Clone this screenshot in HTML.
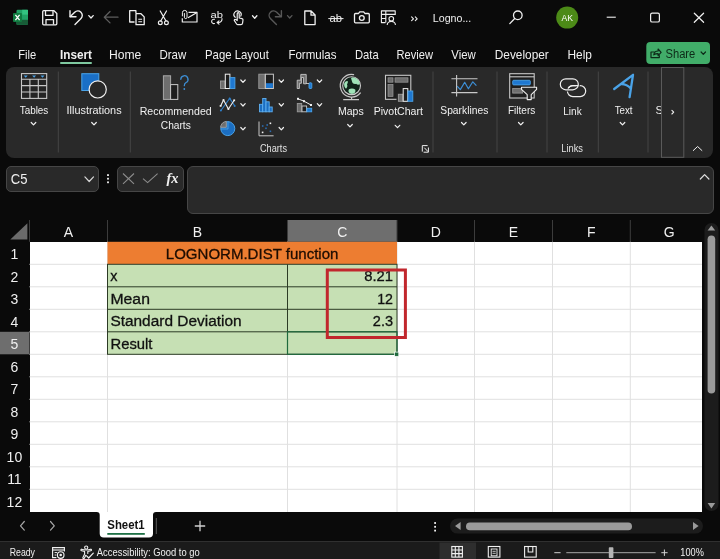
<!DOCTYPE html>
<html lang="en">
<head>
<meta charset="utf-8">
<title>Logno... - Excel</title>
<style>
html,body{margin:0;padding:0;background:#0a0a0a;}
body{width:720px;height:559px;overflow:hidden;position:relative;font-family:"Liberation Sans", sans-serif;color:#fff;}
.sec{position:absolute;left:0;width:720px;overflow:hidden;will-change:transform;}
svg{position:absolute;left:0;top:0;display:block;font-family:"Liberation Sans", sans-serif;}
svg text{font-family:"Liberation Sans", sans-serif;white-space:pre;}
#titlebar{top:0;height:38px;}
#tabs{top:38px;height:29px;}
#ribbon{top:67px;height:91px;}
#ribbon .panel{position:absolute;left:6px;top:0;width:707px;height:90.5px;background:#292929;border-radius:8px;}
#formulabar{top:158px;height:62px;}
.fbox{position:absolute;background:#292929;border:1px solid #464646;border-radius:5px;box-sizing:border-box;}
#sheet{top:220px;height:292px;}
#colhead{position:absolute;left:0;top:0;width:702px;height:22px;background:#0a0a0a;}
#rowhead{position:absolute;left:0;top:22px;width:29.5px;height:270px;background:#0a0a0a;}
#cells{position:absolute;left:29.5px;top:21.8px;width:672.5px;height:270.2px;background:#fff;}
#sheettabs{top:512px;height:29px;}
#statusbar{top:541px;height:18px;background:#1b1b1b;border-top:1px solid #303030;box-sizing:border-box;}
</style>
</head>
<body>
<div class="sec" id="titlebar"><svg width="720" height="38" viewBox="0 0 720 38"><g><rect x="16.5" y="9.8" width="11.5" height="15" rx="1.2" fill="#21a366"/><rect x="22.2" y="9.8" width="5.8" height="5" fill="#33c481"/><rect x="16.5" y="14.8" width="5.7" height="5" fill="#107c41"/><rect x="22.2" y="14.8" width="5.8" height="5" fill="#21a366"/><rect x="16.5" y="19.8" width="11.5" height="5" fill="#185c37"/><rect x="13" y="13" width="9" height="9" rx="1" fill="#107c41"/><path d="M15.4 14.8 L19.6 20.2 M19.6 14.8 L15.4 20.2" stroke="#fff" stroke-width="1.3" fill="none"/></g><g fill="none" stroke="#f0f0f0" stroke-width="1.3" stroke-linejoin="round"><path d="M42.7 11.7 a1 1 0 0 1 1-1 h10.3 l2.8 2.8 v10.3 a1 1 0 0 1 -1 1 h-12.1 a1 1 0 0 1 -1-1 z"/><path d="M45.5 10.8 v4.6 h7.5 v-4.6"/><path d="M46 24.6 v-5 h7.5 v5"/></g><g fill="none" stroke="#f0f0f0" stroke-width="1.4" stroke-linecap="round" stroke-linejoin="round"><path d="M70 10.8 v6 h6"/><path d="M70.3 16.6 l4.4 -4.3 a4.4 4.4 0 0 1 6.3 6.2 l-6 6"/></g><path d="M88.8 15.600000000000001 L91 18.0 L93.2 15.600000000000001" fill="none" stroke="#f0f0f0" stroke-width="1.3" stroke-linecap="round" stroke-linejoin="round"/><path d="M118 17.2 H104.5 M110 11.5 L104.3 17.2 L110 22.9" fill="none" stroke="#5e5e5e" stroke-width="1.3" stroke-linecap="round" stroke-linejoin="round"/><g fill="none" stroke="#f0f0f0" stroke-width="1.3" stroke-linejoin="round"><path d="M134.5 22 h-4.8 v-11.3 h6.2 l0 2.5"/><path d="M136 13.7 h5 l3.2 3.2 v7.8 h-8.2 z"/><path d="M138.3 19.3 h3.8 M138.3 21.8 h3.8" stroke-width="1.1"/></g><g fill="none" stroke="#f0f0f0" stroke-width="1.2" stroke-linecap="round"><path d="M160.2 11 L166 21 M166.5 11 L160.7 21"/><circle cx="160.3" cy="22.7" r="1.9"/><circle cx="166.4" cy="22.7" r="1.9"/></g><g fill="none" stroke="#f0f0f0" stroke-width="1.2" stroke-linejoin="round"><path d="M188.5 12.3 H197 V22 H182.3 V18.3"/><path d="M188 17.8 L196.6 12.7"/><path d="M182.4 16.3 v-3.6 a2.3 2.3 0 0 1 4.6 0 v4.6 a1.3 1.3 0 0 1 -2.6 0 v-4.2" stroke-width="1"/></g><text x="210.5" y="17.5" font-size="9" fill="#f0f0f0" text-anchor="start" font-weight="normal" textLength="12.5" lengthAdjust="spacingAndGlyphs">ab</text><g fill="none" stroke="#f0f0f0" stroke-width="1.1" stroke-linecap="round" stroke-linejoin="round"><path d="M214.5 19.3 a2.2 2.2 0 1 0 0 4.2"/><path d="M222 18.5 a3.5 3.5 0 0 1 -3.5 4 h-1.2"/><path d="M219 20.8 l-1.8 1.7 l1.8 1.7"/></g><g fill="none" stroke="#f0f0f0" stroke-width="1.2" stroke-linecap="round" stroke-linejoin="round"><path d="M235.2 17.3 a3.6 3.6 0 1 1 5.6 -1.2"/><path d="M237.2 20.5 v-6.8 a1 1 0 0 1 2 0 v4.3 l2.8 0.6 a1.3 1.3 0 0 1 1 1.4 l-0.5 3.4 a1.6 1.6 0 0 1 -1.6 1.3 h-3 a1.6 1.6 0 0 1 -1.3 -0.7 l-2.2 -3.3 a0.9 0.9 0 0 1 1.4 -1.1 z"/></g><path d="M252.5 15.8 L254.7 18.2 L256.9 15.8" fill="none" stroke="#f0f0f0" stroke-width="1.3" stroke-linecap="round" stroke-linejoin="round"/><g fill="none" stroke="#585858" stroke-width="1.4" stroke-linecap="round" stroke-linejoin="round"><path d="M281.4 10.8 v6 h-6"/><path d="M281.1 16.6 l-4.4 -4.3 a4.4 4.4 0 0 0 -6.3 6.2 l6 6"/></g><path d="M287.5 15.600000000000001 L289.7 18.0 L291.9 15.600000000000001" fill="none" stroke="#585858" stroke-width="1.3" stroke-linecap="round" stroke-linejoin="round"/><path d="M304.8 11 h6.3 l4 4 v9.6 h-10.3 z M311 11 v4.2 h4.1" fill="none" stroke="#f0f0f0" stroke-width="1.3" stroke-linejoin="round"/><text x="329.5" y="21.5" font-size="10" fill="#f0f0f0" text-anchor="start" font-weight="normal" textLength="12.5" lengthAdjust="spacingAndGlyphs">ab</text><path d="M328.3 18.6 H343.5" stroke="#f0f0f0" stroke-width="1"/><g fill="none" stroke="#f0f0f0" stroke-width="1.3" stroke-linejoin="round"><path d="M355.5 13.5 h3 l1.2 -1.7 h4 l1.2 1.7 h3.4 a1 1 0 0 1 1 1 v7.3 a1 1 0 0 1 -1 1 h-12.8 a1 1 0 0 1 -1 -1 v-7.3 a1 1 0 0 1 1 -1z"/><circle cx="361.8" cy="18" r="2.4"/></g><g fill="none" stroke="#f0f0f0" stroke-width="1.1" stroke-linejoin="round"><path d="M385.5 22.6 H381.4 V10.9 H395.2 V15"/><path d="M381.4 14.4 H395.2 M385.8 10.9 V22.6 M381.4 18.5 H386"/><circle cx="391.3" cy="18.8" r="2.3"/><path d="M387.2 25 a4.1 3.6 0 0 1 8.2 0"/></g><path d="M411.6 16.9 l1.9 1.9 l-1.9 1.9 M415.3 16.9 l1.9 1.9 l-1.9 1.9" fill="none" stroke="#f0f0f0" stroke-width="1.1" stroke-linecap="round" stroke-linejoin="round"/><text x="432.8" y="22" font-size="11" fill="#f0f0f0" text-anchor="start" font-weight="normal" textLength="38.5" lengthAdjust="spacingAndGlyphs">Logno...</text><g fill="none" stroke="#f0f0f0" stroke-width="1.3" stroke-linecap="round"><circle cx="517.8" cy="15.3" r="4.3"/><path d="M514.7 18.5 L509.8 23.6"/></g><circle cx="567.2" cy="17.6" r="11" fill="#4c8a17"/><text x="567.2" y="21" font-size="9.5" fill="#fff" text-anchor="middle" font-weight="normal" textLength="11.5" lengthAdjust="spacingAndGlyphs">AK</text><path d="M606.7 17.2 H615.8" stroke="#f0f0f0" stroke-width="1.1"/><rect x="650.6" y="13.2" width="8.8" height="8.8" rx="1.6" fill="none" stroke="#f0f0f0" stroke-width="1.2"/><path d="M694.3 13.2 L703.6 22.3 M703.6 13.2 L694.3 22.3" stroke="#f0f0f0" stroke-width="1.2" stroke-linecap="round"/></svg></div>
<div class="sec" id="tabs"><svg width="720" height="29" viewBox="0 38 720 29"><text x="18.3" y="58.6" font-size="12.2" fill="#f0f0f0" text-anchor="start" font-weight="normal" textLength="18.0" lengthAdjust="spacingAndGlyphs">File</text><text x="60" y="58.6" font-size="12.2" fill="#f0f0f0" text-anchor="start" font-weight="bold" textLength="32" lengthAdjust="spacingAndGlyphs">Insert</text><text x="109" y="58.6" font-size="12.2" fill="#f0f0f0" text-anchor="start" font-weight="normal" textLength="32.3" lengthAdjust="spacingAndGlyphs">Home</text><text x="159.5" y="58.6" font-size="12.2" fill="#f0f0f0" text-anchor="start" font-weight="normal" textLength="26.8" lengthAdjust="spacingAndGlyphs">Draw</text><text x="205" y="58.6" font-size="12.2" fill="#f0f0f0" text-anchor="start" font-weight="normal" textLength="63.8" lengthAdjust="spacingAndGlyphs">Page Layout</text><text x="288.4" y="58.6" font-size="12.2" fill="#f0f0f0" text-anchor="start" font-weight="normal" textLength="48.1" lengthAdjust="spacingAndGlyphs">Formulas</text><text x="355" y="58.6" font-size="12.2" fill="#f0f0f0" text-anchor="start" font-weight="normal" textLength="23.7" lengthAdjust="spacingAndGlyphs">Data</text><text x="396.6" y="58.6" font-size="12.2" fill="#f0f0f0" text-anchor="start" font-weight="normal" textLength="36.4" lengthAdjust="spacingAndGlyphs">Review</text><text x="451.3" y="58.6" font-size="12.2" fill="#f0f0f0" text-anchor="start" font-weight="normal" textLength="24.5" lengthAdjust="spacingAndGlyphs">View</text><text x="494.8" y="58.6" font-size="12.2" fill="#f0f0f0" text-anchor="start" font-weight="normal" textLength="54.0" lengthAdjust="spacingAndGlyphs">Developer</text><text x="567.5" y="58.6" font-size="12.2" fill="#f0f0f0" text-anchor="start" font-weight="normal" textLength="24.5" lengthAdjust="spacingAndGlyphs">Help</text><rect x="60" y="62" width="32" height="2" rx="1" fill="#7fc9a0"/><rect x="646.3" y="42" width="63.7" height="22" rx="4" fill="#41ad69"/><g fill="none" stroke="#0d2a18" stroke-width="1.2" stroke-linejoin="round" stroke-linecap="round"><path d="M654.2 52 h-3.2 v5.6 h8.3 v-2"/><path d="M653.8 54.8 c0.3 -2.6 2 -3.8 4.3 -3.8 v-2 l3 3.3 l-3 3.3 v-2 c-1.8 0 -3.2 0.3 -4.3 1.2z"/></g><text x="665.5" y="57.8" font-size="12" fill="#0d2a18" text-anchor="start" font-weight="normal" textLength="29.8" lengthAdjust="spacingAndGlyphs">Share</text><path d="M701.0999999999999 52.0 L703.3 54.400000000000006 L705.5 52.0" fill="none" stroke="#0d2a18" stroke-width="1.2" stroke-linecap="round" stroke-linejoin="round"/></svg></div>
<div class="sec" id="ribbon"><div class="panel"></div><svg width="720" height="91" viewBox="0 67 720 91"><path d="M58.3 71.5 V152.5" stroke="#454545" stroke-width="1"/><path d="M130.3 71.5 V152.5" stroke="#454545" stroke-width="1"/><path d="M433 71.5 V152.5" stroke="#454545" stroke-width="1"/><path d="M497 71.5 V152.5" stroke="#454545" stroke-width="1"/><path d="M547 71.5 V152.5" stroke="#454545" stroke-width="1"/><path d="M598.3 71.5 V152.5" stroke="#454545" stroke-width="1"/><path d="M648 71.5 V152.5" stroke="#454545" stroke-width="1"/><g fill="none" stroke="#c8c8c8" stroke-width="1.1"><rect x="21.5" y="73.6" width="25.2" height="24.8" fill="#242424"/><path d="M21.5 79.3 H46.7 M21.5 85.6 H46.7 M21.5 92 H46.7 M29.9 79.3 V98.4 M38.3 79.3 V98.4"/></g><path d="M23.7 75.4 h4 l-2 2.3 z" fill="#4aa3e8"/><path d="M32.1 75.4 h4 l-2 2.3 z" fill="#4aa3e8"/><path d="M40.5 75.4 h4 l-2 2.3 z" fill="#4aa3e8"/><text x="19.7" y="113.5" font-size="11" fill="#f0f0f0" text-anchor="start" font-weight="normal" textLength="28.6" lengthAdjust="spacingAndGlyphs">Tables</text><path d="M31.2 122.5 L33.5 124.9 L35.8 122.5" fill="none" stroke="#f0f0f0" stroke-width="1.2" stroke-linecap="round" stroke-linejoin="round"/><rect x="81.8" y="73.7" width="17" height="16.8" fill="#1a6fc6" stroke="#4aa3e8" stroke-width="1"/><circle cx="97.7" cy="89.4" r="8.6" fill="#292929" stroke="#f0f0f0" stroke-width="1.2"/><text x="66.6" y="113.5" font-size="11" fill="#f0f0f0" text-anchor="start" font-weight="normal" textLength="55" lengthAdjust="spacingAndGlyphs">Illustrations</text><path d="M91.7 122.5 L94 124.9 L96.3 122.5" fill="none" stroke="#f0f0f0" stroke-width="1.2" stroke-linecap="round" stroke-linejoin="round"/><rect x="163.4" y="75.8" width="7.2" height="23.6" fill="#6e6e6e" stroke="#a8a8a8" stroke-width="1"/><rect x="170.6" y="84.6" width="7.2" height="14.8" fill="#1e1e1e" stroke="#c8c8c8" stroke-width="1"/><path d="M180.8 79.3 a3.6 3.6 0 1 1 5.3 3.2 c-1.3 0.8 -1.8 1.5 -1.8 3.2" fill="none" stroke="#3d8fd6" stroke-width="1.3" stroke-linecap="round"/><circle cx="184.3" cy="89" r="0.9" fill="#3d8fd6"/><text x="139.7" y="114.8" font-size="11" fill="#f0f0f0" text-anchor="start" font-weight="normal" textLength="72" lengthAdjust="spacingAndGlyphs">Recommended</text><text x="160.8" y="129.3" font-size="11" fill="#f0f0f0" text-anchor="start" font-weight="normal" textLength="30" lengthAdjust="spacingAndGlyphs">Charts</text><path d="M240.8 80.0 L243 82.4 L245.2 80.0" fill="none" stroke="#f0f0f0" stroke-width="1.2" stroke-linecap="round" stroke-linejoin="round"/><path d="M279.1 80.0 L281.3 82.4 L283.5 80.0" fill="none" stroke="#f0f0f0" stroke-width="1.2" stroke-linecap="round" stroke-linejoin="round"/><path d="M317.3 80.0 L319.5 82.4 L321.7 80.0" fill="none" stroke="#f0f0f0" stroke-width="1.2" stroke-linecap="round" stroke-linejoin="round"/><path d="M240.8 103.6 L243 106.0 L245.2 103.6" fill="none" stroke="#f0f0f0" stroke-width="1.2" stroke-linecap="round" stroke-linejoin="round"/><path d="M279.1 103.6 L281.3 106.0 L283.5 103.6" fill="none" stroke="#f0f0f0" stroke-width="1.2" stroke-linecap="round" stroke-linejoin="round"/><path d="M317.3 103.6 L319.5 106.0 L321.7 103.6" fill="none" stroke="#f0f0f0" stroke-width="1.2" stroke-linecap="round" stroke-linejoin="round"/><path d="M240.8 127.49999999999999 L243 129.89999999999998 L245.2 127.49999999999999" fill="none" stroke="#f0f0f0" stroke-width="1.2" stroke-linecap="round" stroke-linejoin="round"/><path d="M279.1 127.49999999999999 L281.3 129.89999999999998 L283.5 127.49999999999999" fill="none" stroke="#f0f0f0" stroke-width="1.2" stroke-linecap="round" stroke-linejoin="round"/><rect x="220.5" y="81" width="4.6" height="7.5" fill="#6e6e6e" stroke="#9a9a9a" stroke-width="0.9"/><rect x="225.3" y="74.2" width="4.6" height="14.3" fill="#1e1e1e" stroke="#f0f0f0" stroke-width="1"/><rect x="230.1" y="77.6" width="4.8" height="10.9" fill="#1f78d1" stroke="#4aa3e8" stroke-width="0.9"/><rect x="258.8" y="74.2" width="6.2" height="14.3" fill="#6e6e6e" stroke="#9a9a9a" stroke-width="0.9"/><rect x="265.4" y="74.2" width="8" height="14.3" fill="#1e1e1e" stroke="#c8c8c8" stroke-width="1"/><rect x="266" y="83.2" width="6.9" height="4.8" fill="#1f78d1"/><path d="M297.2 88.5 v-8.3 h3.6 v-5.8 h5.4 v9.4 h-2.6 v-6.3 h-2.2 v5.8 h-2 v5.2z" fill="#6e6e6e" stroke="#c8c8c8" stroke-width="0.9" stroke-linejoin="round"/><rect x="309" y="82.8" width="2.8" height="5.7" rx="0.8" fill="#1f78d1" stroke="#4aa3e8" stroke-width="0.9"/><path d="M306 83.5 h3" stroke="#c8c8c8" stroke-width="0.9"/><path d="M220.9 110.5 L229.7 98.4 L234.7 105.9" fill="none" stroke="#2f7fc8" stroke-width="1.1" stroke-linejoin="round"/><path d="M220.6 105.9 L223.5 100 L228.4 109 L234.2 100.3" fill="none" stroke="#f0f0f0" stroke-width="1.1" stroke-linejoin="round"/><circle cx="220.9" cy="110.5" r="1" fill="#2f7fc8"/><circle cx="229.7" cy="98.4" r="1" fill="#2f7fc8"/><circle cx="234.7" cy="105.9" r="1" fill="#2f7fc8"/><rect x="219.7" y="105.0" width="1.8" height="1.8" fill="#f0f0f0"/><rect x="222.6" y="99.1" width="1.8" height="1.8" fill="#f0f0f0"/><rect x="227.5" y="108.1" width="1.8" height="1.8" fill="#f0f0f0"/><rect x="233.29999999999998" y="99.39999999999999" width="1.8" height="1.8" fill="#f0f0f0"/><g fill="#1b6ec2" stroke="#5fb0f0" stroke-width="0.9"><rect x="259.5" y="104.3" width="3.2" height="7.5"/><rect x="262.7" y="98.5" width="3.3" height="13.3"/><rect x="266" y="101.8" width="3.2" height="10"/><rect x="269.2" y="107" width="3" height="4.8"/></g><rect x="297.3" y="103.5" width="4.4" height="8.3" fill="#6e6e6e" stroke="#9a9a9a" stroke-width="0.9"/><rect x="302" y="106" width="4.6" height="5.8" fill="#1e1e1e" stroke="#c8c8c8" stroke-width="0.9"/><rect x="306.9" y="108.3" width="4.8" height="3.5" fill="#1f78d1" stroke="#4aa3e8" stroke-width="0.9"/><path d="M298 98.8 L304 101.2 L311 105" fill="none" stroke="#f0f0f0" stroke-width="1"/><rect x="297" y="97.8" width="2" height="2" fill="#f0f0f0"/><rect x="303" y="100.2" width="2" height="2" fill="#f0f0f0"/><rect x="310" y="104" width="2" height="2" fill="#f0f0f0"/><circle cx="227.8" cy="128.6" r="7" fill="#1b6ec2" stroke="#4aa3e8" stroke-width="1"/><path d="M226.3 127.3 V121.4 A6.2 6.2 0 0 0 220.6 127.3 Z" fill="#6e6e6e" stroke="#a0a0a0" stroke-width="0.9"/><path d="M228 121.5 V129 H220.7" fill="none" stroke="#4aa3e8" stroke-width="0.9"/><path d="M259 121.5 V135.8 H273.6" fill="none" stroke="#c8c8c8" stroke-width="1"/><rect x="261.9" y="125.2" width="1.6" height="1.6" fill="#2c6cb0"/><rect x="265.2" y="127.50000000000001" width="1.6" height="1.6" fill="#2c6cb0"/><rect x="269.59999999999997" y="130.5" width="1.6" height="1.6" fill="#2c6cb0"/><rect x="266.4" y="124.2" width="1.6" height="1.6" fill="#2c6cb0"/><rect x="269.59999999999997" y="122.5" width="1.6" height="1.6" fill="#f0f0f0"/><rect x="261.8" y="131.6" width="1.6" height="1.6" fill="#f0f0f0"/><text x="260" y="151.9" font-size="10" fill="#e2e2e2" text-anchor="start" font-weight="normal" textLength="27" lengthAdjust="spacingAndGlyphs">Charts</text><circle cx="351.6" cy="85.7" r="8.9" fill="#10241a" stroke="#c8c8c8" stroke-width="1.1"/><path d="M344.2 83.5 c0.6 -1.6 1.8 -2.6 3.4 -2.4 c0.6 1 0 2.4 -0.6 3.4 c0.8 1.2 0.2 3.2 -1 4.2 c-1.4 -1 -2.2 -3.2 -1.8 -5.2 z M351 78 c1.6 -0.8 3.6 -0.5 5.2 0.4 c2 1.2 3.4 3.2 3.7 5.6 c-1.2 1.2 -2.8 0.8 -3.8 -0.2 c-1.6 0.6 -3.6 -0.2 -4 -2 c-0.3 -1.4 -0.9 -2.6 -1.1 -3.8 z M349 89.2 c1.8 -1.2 4.6 -1 6.2 0.2 c0.8 1.6 -0.2 3.4 -1.6 4.2 c-1.8 0.6 -3.6 0.2 -4.6 -1 c-0.7 -1.1 -0.7 -2.4 0 -3.4 z" fill="#9fe3b8"/><path d="M353.6 74.6 A11.3 11.3 0 1 0 360.3 93" fill="none" stroke="#c8c8c8" stroke-width="1.2" stroke-linecap="round"/><path d="M351.6 97 V99.4 M343.2 99.6 H359" fill="none" stroke="#c8c8c8" stroke-width="1.2"/><text x="338" y="114.8" font-size="11" fill="#f0f0f0" text-anchor="start" font-weight="normal" textLength="25.7" lengthAdjust="spacingAndGlyphs">Maps</text><path d="M347.7 124.5 L350 126.9 L352.3 124.5" fill="none" stroke="#f0f0f0" stroke-width="1.2" stroke-linecap="round" stroke-linejoin="round"/><rect x="385.5" y="75.3" width="25.3" height="24" fill="#1e1e1e" stroke="#c8c8c8" stroke-width="1.1"/><rect x="388" y="77.8" width="5" height="4.4" fill="#6e6e6e" stroke="#9a9a9a" stroke-width="0.7"/><rect x="395" y="77.8" width="13" height="4.4" fill="#6e6e6e" stroke="#9a9a9a" stroke-width="0.7"/><rect x="388" y="84.4" width="5" height="12" fill="#6e6e6e" stroke="#9a9a9a" stroke-width="0.7"/><rect x="396.5" y="93.5" width="18.5" height="8" fill="#292929"/><rect x="398.4" y="94.3" width="4.6" height="7" fill="#6e6e6e" stroke="#9a9a9a" stroke-width="0.9"/><rect x="403.2" y="88.6" width="4.6" height="12.7" fill="#1e1e1e" stroke="#f0f0f0" stroke-width="1"/><rect x="408" y="91" width="4.8" height="10.3" fill="#1f78d1" stroke="#4aa3e8" stroke-width="0.9"/><text x="373.7" y="114.8" font-size="11" fill="#f0f0f0" text-anchor="start" font-weight="normal" textLength="49.2" lengthAdjust="spacingAndGlyphs">PivotChart</text><path d="M395.2 125.3 L397.5 127.7 L399.8 125.3" fill="none" stroke="#f0f0f0" stroke-width="1.2" stroke-linecap="round" stroke-linejoin="round"/><path d="M427.6 145.6 H422.3 V151.6 M428.4 147.5 V152.2 H423.6 M424.3 147.7 L428 151.6" fill="none" stroke="#f0f0f0" stroke-width="1"/><path d="M456.6 75 V96.5 M451.4 78.7 H477.5 M451.4 92.6 H477.5" fill="none" stroke="#c8c8c8" stroke-width="1.1"/><path d="M457.2 86.2 L460.3 89.6 L464.7 82.3 L468.4 88.8 L472.8 81.8 L476.4 85.6" fill="none" stroke="#3d8fd6" stroke-width="1.2" stroke-linejoin="round"/><text x="440.3" y="113.5" font-size="11" fill="#f0f0f0" text-anchor="start" font-weight="normal" textLength="48" lengthAdjust="spacingAndGlyphs">Sparklines</text><path d="M461.5 122.5 L463.8 124.9 L466.1 122.5" fill="none" stroke="#f0f0f0" stroke-width="1.2" stroke-linecap="round" stroke-linejoin="round"/><rect x="509.7" y="73.7" width="24.5" height="24.3" fill="#1e1e1e" stroke="#c8c8c8" stroke-width="1.1"/><path d="M509.7 76.8 H534.2" stroke="#c8c8c8" stroke-width="1.1"/><rect x="512.7" y="80.3" width="17.6" height="4.6" rx="1" fill="#1f78d1" stroke="#4aa3e8" stroke-width="0.9"/><rect x="512.7" y="88.5" width="10" height="4.6" fill="#6e6e6e" stroke="#9a9a9a" stroke-width="0.8"/><path d="M521.5 87.3 H536.6 V89.4 L531.2 94.6 V99.6 H527.2 V94.6 L521.5 89.4 Z" fill="#292929" stroke="#f0f0f0" stroke-width="1.1" stroke-linejoin="round"/><text x="508" y="113.5" font-size="11" fill="#f0f0f0" text-anchor="start" font-weight="normal" textLength="27.3" lengthAdjust="spacingAndGlyphs">Filters</text><path d="M518.5 122.5 L520.8 124.9 L523.0999999999999 122.5" fill="none" stroke="#f0f0f0" stroke-width="1.2" stroke-linecap="round" stroke-linejoin="round"/><g fill="none" stroke="#f0f0f0" stroke-width="1.2" stroke-linecap="round"><rect x="567.4" y="85.6" width="18.3" height="11" rx="5.5"/><rect x="560.3" y="78.8" width="18" height="11" rx="5.5" stroke="#292929" stroke-width="3.4"/><rect x="560.3" y="78.8" width="18" height="11" rx="5.5"/><path d="M568.2 88.3 A5.5 5.5 0 0 1 572.9 85.6 H578" /></g><text x="563.3" y="115" font-size="11" fill="#f0f0f0" text-anchor="start" font-weight="normal" textLength="18.4" lengthAdjust="spacingAndGlyphs">Link</text><text x="561.3" y="152.2" font-size="10" fill="#e2e2e2" text-anchor="start" font-weight="normal" textLength="21.7" lengthAdjust="spacingAndGlyphs">Links</text><path d="M614.2 89 L633 74.8 L629.6 97.2 M621 84.2 C624.5 84 628.5 86 631 88.6" fill="none" stroke="#4aa3e8" stroke-width="2.3" stroke-linecap="round" stroke-linejoin="round"/><text x="614.7" y="113.5" font-size="11" fill="#f0f0f0" text-anchor="start" font-weight="normal" textLength="17.8" lengthAdjust="spacingAndGlyphs">Text</text><path d="M620.2 122.5 L622.5 124.9 L624.8 122.5" fill="none" stroke="#f0f0f0" stroke-width="1.2" stroke-linecap="round" stroke-linejoin="round"/><text x="655.5" y="114" font-size="11" fill="#f0f0f0" text-anchor="start" font-weight="normal">S</text><rect x="661.5" y="67.5" width="22.3" height="89.8" fill="#292929" stroke="#5a5a5a" stroke-width="1"/><path d="M671.9 110.4 l1.8 1.8 l-1.8 1.8" fill="none" stroke="#f0f0f0" stroke-width="1.1" stroke-linecap="round" stroke-linejoin="round"/><path d="M693.3 150.5 L697.6 146.5 L701.9 150.5" fill="none" stroke="#f0f0f0" stroke-width="1" stroke-linecap="round" stroke-linejoin="round"/></svg></div>
<div class="sec" id="formulabar"><div class="fbox" style="left:6.3px;top:7.6px;width:92.4px;height:26px;"></div><div class="fbox" style="left:117.2px;top:7.6px;width:66.6px;height:26px;"></div><div class="fbox" style="left:187px;top:7.6px;width:526.6px;height:48.5px;border-radius:6px;"></div><svg width="720" height="62" viewBox="0 158 720 62"><text x="10.8" y="183.7" font-size="14" fill="#f0f0f0" text-anchor="start" font-weight="normal" textLength="16.7" lengthAdjust="spacingAndGlyphs">C5</text><path d="M84.9 176.89999999999998 L89.2 181.5 L93.5 176.89999999999998" fill="none" stroke="#d8d8d8" stroke-width="1.2" stroke-linecap="round" stroke-linejoin="round"/><rect x="107.1" y="174.2" width="1.8" height="1.8" fill="#f0f0f0"/><rect x="107.1" y="177.79999999999998" width="1.8" height="1.8" fill="#f0f0f0"/><rect x="107.1" y="181.39999999999998" width="1.8" height="1.8" fill="#f0f0f0"/><path d="M123 173.5 L134 183.8 M134 173.5 L123 183.8" stroke="#8c8c8c" stroke-width="1.1" fill="none"/><path d="M143 178.7 L147.6 182.6 L157.6 173.6" stroke="#8c8c8c" stroke-width="1.1" fill="none"/><text x="166.5" y="183" font-size="14" fill="#f0f0f0" text-anchor="start" font-weight="bold" textLength="12" lengthAdjust="spacingAndGlyphs" style="font-family:'Liberation Serif',serif" font-style="italic">fx</text><path d="M700.3 179 L704.6 174.6 L708.9 179" fill="none" stroke="#e0e0e0" stroke-width="1.2" stroke-linecap="round" stroke-linejoin="round"/></svg></div>
<div class="sec" id="sheet"><div id="colhead"></div><div id="rowhead"></div><div id="cells"></div><svg width="720" height="292" viewBox="0 220 720 292"><rect x="287.5" y="220" width="109.5" height="21.8" fill="#6e6e6e"/><rect x="0" y="331.8" width="29.5" height="22.5" fill="#6e6e6e"/><path d="M10.3 239.6 H27.4 V223.2 Z" fill="#6b6b6b"/><path d="M29.5 220 V241.8" stroke="#3c3c3c" stroke-width="1"/><text x="68.5" y="236.7" font-size="14" fill="#f0f0f0" text-anchor="middle" font-weight="normal">A</text><path d="M107.5 220 V241.8" stroke="#3c3c3c" stroke-width="1"/><text x="197.5" y="236.7" font-size="14" fill="#f0f0f0" text-anchor="middle" font-weight="normal">B</text><path d="M287.5 220 V241.8" stroke="#3c3c3c" stroke-width="1"/><text x="342.2" y="236.7" font-size="14" fill="#f0f0f0" text-anchor="middle" font-weight="normal">C</text><path d="M397 220 V241.8" stroke="#3c3c3c" stroke-width="1"/><text x="435.8" y="236.7" font-size="14" fill="#f0f0f0" text-anchor="middle" font-weight="normal">D</text><path d="M474.5 220 V241.8" stroke="#3c3c3c" stroke-width="1"/><text x="513.5" y="236.7" font-size="14" fill="#f0f0f0" text-anchor="middle" font-weight="normal">E</text><path d="M552.5 220 V241.8" stroke="#3c3c3c" stroke-width="1"/><text x="591.4" y="236.7" font-size="14" fill="#f0f0f0" text-anchor="middle" font-weight="normal">F</text><path d="M630.3 220 V241.8" stroke="#3c3c3c" stroke-width="1"/><text x="669.1" y="236.7" font-size="14" fill="#f0f0f0" text-anchor="middle" font-weight="normal">G</text><path d="M107.5 241.8 V512" stroke="#e0e0e0" stroke-width="1"/><path d="M287.5 241.8 V512" stroke="#e0e0e0" stroke-width="1"/><path d="M397 241.8 V512" stroke="#e0e0e0" stroke-width="1"/><path d="M474.5 241.8 V512" stroke="#e0e0e0" stroke-width="1"/><path d="M552.5 241.8 V512" stroke="#e0e0e0" stroke-width="1"/><path d="M630.3 241.8 V512" stroke="#e0e0e0" stroke-width="1"/><path d="M29.5 264.3 H702" stroke="#e0e0e0" stroke-width="1"/><path d="M29.5 286.8 H702" stroke="#e0e0e0" stroke-width="1"/><path d="M29.5 309.3 H702" stroke="#e0e0e0" stroke-width="1"/><path d="M29.5 331.8 H702" stroke="#e0e0e0" stroke-width="1"/><path d="M29.5 354.3 H702" stroke="#e0e0e0" stroke-width="1"/><path d="M29.5 376.8 H702" stroke="#e0e0e0" stroke-width="1"/><path d="M29.5 399.3 H702" stroke="#e0e0e0" stroke-width="1"/><path d="M29.5 421.8 H702" stroke="#e0e0e0" stroke-width="1"/><path d="M29.5 444.3 H702" stroke="#e0e0e0" stroke-width="1"/><path d="M29.5 466.8 H702" stroke="#e0e0e0" stroke-width="1"/><path d="M29.5 489.3 H702" stroke="#e0e0e0" stroke-width="1"/><text x="14.4" y="259.2" font-size="14" fill="#f0f0f0" text-anchor="middle" font-weight="normal">1</text><text x="14.4" y="281.7" font-size="14" fill="#f0f0f0" text-anchor="middle" font-weight="normal">2</text><text x="14.4" y="304.2" font-size="14" fill="#f0f0f0" text-anchor="middle" font-weight="normal">3</text><text x="14.4" y="326.7" font-size="14" fill="#f0f0f0" text-anchor="middle" font-weight="normal">4</text><text x="14.4" y="349.2" font-size="14" fill="#f0f0f0" text-anchor="middle" font-weight="normal">5</text><text x="14.4" y="371.7" font-size="14" fill="#f0f0f0" text-anchor="middle" font-weight="normal">6</text><text x="14.4" y="394.2" font-size="14" fill="#f0f0f0" text-anchor="middle" font-weight="normal">7</text><text x="14.4" y="416.7" font-size="14" fill="#f0f0f0" text-anchor="middle" font-weight="normal">8</text><text x="14.4" y="439.2" font-size="14" fill="#f0f0f0" text-anchor="middle" font-weight="normal">9</text><text x="14.4" y="461.7" font-size="14" fill="#f0f0f0" text-anchor="middle" font-weight="normal">10</text><text x="14.4" y="484.2" font-size="14" fill="#f0f0f0" text-anchor="middle" font-weight="normal">11</text><text x="14.4" y="506.7" font-size="14" fill="#f0f0f0" text-anchor="middle" font-weight="normal">12</text><rect x="107.5" y="241.8" width="289.5" height="22.5" fill="#ed7d31"/><rect x="107.5" y="264.3" width="289.5" height="90.0" fill="#c6e0b4"/><g stroke="#2c3b25" stroke-width="1" fill="none"><rect x="107.5" y="264.3" width="289.5" height="90.0"/><path d="M287.5 264.3 V354.3"/><path d="M107.5 286.8 H397"/><path d="M107.5 309.3 H397"/><path d="M107.5 331.8 H397"/></g><rect x="287.5" y="331.8" width="109.5" height="22.5" fill="none" stroke="#1f6a3d" stroke-width="1.2"/><rect x="394.6" y="352.1" width="4.2" height="4.2" fill="#1f6b3c" stroke="#fff" stroke-width="0.7"/><text x="165.8" y="258.6" font-size="14.7" fill="#1e0d02" text-anchor="start" font-weight="normal" textLength="172.6" lengthAdjust="spacingAndGlyphs" stroke="#1e0d02" stroke-width="0.3">LOGNORM.DIST function</text><text x="110.3" y="281.2" font-size="14.7" fill="#111" text-anchor="start" font-weight="normal" textLength="7.2" lengthAdjust="spacingAndGlyphs" stroke="#111" stroke-width="0.3">x</text><text x="110.5" y="303.8" font-size="14.7" fill="#111" text-anchor="start" font-weight="normal" textLength="39.4" lengthAdjust="spacingAndGlyphs" stroke="#111" stroke-width="0.3">Mean</text><text x="110.4" y="326.3" font-size="14.7" fill="#111" text-anchor="start" font-weight="normal" textLength="131.2" lengthAdjust="spacingAndGlyphs" stroke="#111" stroke-width="0.3">Standard Deviation</text><text x="110.5" y="348.8" font-size="14.7" fill="#111" text-anchor="start" font-weight="normal" textLength="42" lengthAdjust="spacingAndGlyphs" stroke="#111" stroke-width="0.3">Result</text><text x="364.2" y="281.3" font-size="14.7" fill="#111" text-anchor="start" font-weight="normal" textLength="28.8" lengthAdjust="spacingAndGlyphs" stroke="#111" stroke-width="0.3">8.21</text><text x="377.2" y="303.8" font-size="14.7" fill="#111" text-anchor="start" font-weight="normal" textLength="15.8" lengthAdjust="spacingAndGlyphs" stroke="#111" stroke-width="0.3">12</text><text x="372.8" y="326.3" font-size="14.7" fill="#111" text-anchor="start" font-weight="normal" textLength="20.2" lengthAdjust="spacingAndGlyphs" stroke="#111" stroke-width="0.3">2.3</text><rect x="327.3" y="270" width="78.1" height="67.5" fill="none" stroke="#c1272d" stroke-width="3"/><rect x="702" y="220" width="18" height="292" fill="#0a0a0a"/><rect x="704.5" y="223" width="14" height="288" rx="7" fill="#1c1c1c"/><path d="M707.6 230.5 H715.2 L711.4 225.5 Z" fill="#9a9a9a"/><rect x="707.6" y="235.5" width="7.6" height="158" rx="3.8" fill="#9a9a9a"/><path d="M707.6 503 H715.2 L711.4 508.5 Z" fill="#9a9a9a"/></svg></div>
<div class="sec" id="sheettabs"><svg width="720" height="29" viewBox="0 512 720 29"><path d="M24.3 521.5 L20.5 525.8 L24.3 530.1" fill="none" stroke="#a8a8a8" stroke-width="1.2" stroke-linecap="round" stroke-linejoin="round"/><path d="M50.5 521.5 L54.3 525.8 L50.5 530.1" fill="none" stroke="#a8a8a8" stroke-width="1.2" stroke-linecap="round" stroke-linejoin="round"/><path d="M96.7 512 H156 a3 3 0 0 0 -3 3 V533.5 a4 4 0 0 1 -4 4 H103.7 a4 4 0 0 1 -4 -4 V515 a3 3 0 0 0 -3 -3 Z" fill="#ffffff"/><text x="107.3" y="529.4" font-size="13" fill="#111" text-anchor="start" font-weight="bold" textLength="37.4" lengthAdjust="spacingAndGlyphs">Sheet1</text><rect x="107.3" y="533" width="37.5" height="1.8" fill="#1e7145"/><path d="M156.3 518 V534" stroke="#5a5a5a" stroke-width="1"/><path d="M194.8 526 H205.2 M200 520.8 V531.2" stroke="#d0d0d0" stroke-width="1.3"/><rect x="434.2" y="522.1" width="1.8" height="1.8" fill="#f0f0f0"/><rect x="434.2" y="525.9" width="1.8" height="1.8" fill="#f0f0f0"/><rect x="434.2" y="529.7" width="1.8" height="1.8" fill="#f0f0f0"/><rect x="450" y="518.6" width="253" height="15" rx="7.5" fill="#1c1c1c"/><path d="M460.6 522 V530 L455 526 Z" fill="#9a9a9a"/><rect x="466" y="522.6" width="166" height="7.6" rx="3.8" fill="#9a9a9a"/><path d="M693 522 V530 L698.6 526 Z" fill="#9a9a9a"/></svg></div>
<div class="sec" id="statusbar"><svg width="720" height="18" viewBox="0 541 720 18"><text x="9.7" y="555.3" font-size="10" fill="#f0f0f0" text-anchor="start" font-weight="normal" textLength="25.3" lengthAdjust="spacingAndGlyphs">Ready</text><g fill="none" stroke="#f0f0f0" stroke-width="1.15"><path d="M56.4 556.6 H52.6 V546.6 H64.4 V550.4"/><path d="M52.6 549 H64.4"/><path d="M54.6 551.6 h2.6 M54.6 554 h1.8" stroke-width="1"/><circle cx="60.7" cy="554" r="3.3"/><circle cx="60.7" cy="554" r="1.3" fill="#f0f0f0" stroke="none"/></g><g fill="none" stroke="#f0f0f0" stroke-width="1.1" stroke-linecap="round" stroke-linejoin="round"><circle cx="86.2" cy="546.6" r="1.6"/><path d="M81.4 548.2 c-0.8 0.3 -0.6 1.4 0.3 1.5 l2.9 0.7 v2.6 l-1.7 3.6 c-0.3 0.9 0.9 1.4 1.4 0.6 l1.5 -3"/><path d="M91 548.2 c0.8 0.3 0.6 1.4 -0.3 1.5 l-2.9 0.7 v2"/><path d="M81.6 548.2 c1.4 0.5 3 0.8 4.6 0.8 s3.2 -0.3 4.6 -0.8"/><path d="M86.6 554.8 l2.1 2.2 l4.6 -4.8" stroke-width="1.2"/></g><text x="96.8" y="555.3" font-size="10" fill="#f0f0f0" text-anchor="start" font-weight="normal" textLength="103" lengthAdjust="spacingAndGlyphs">Accessibility: Good to go</text><rect x="439.5" y="541.5" width="36.5" height="17.5" fill="#2e2e2e"/><g fill="none" stroke="#f0f0f0" stroke-width="1.1"><rect x="451.8" y="545.5" width="10.6" height="10.6"/><path d="M455.3 545.5 V556.1 M458.9 545.5 V556.1 M451.8 549 H462.4 M451.8 552.6 H462.4"/></g><g fill="none" stroke="#f0f0f0" stroke-width="1.1"><rect x="488.3" y="545.5" width="11.6" height="10.6"/><rect x="491.2" y="548" width="5.8" height="6.8" stroke-width="0.9"/><path d="M492.5 550.3 h3.2 M492.5 552.3 h3.2" stroke-width="0.8"/></g><g fill="none" stroke="#f0f0f0" stroke-width="1.1"><rect x="524.6" y="545.5" width="11.6" height="10.6"/><path d="M528.2 545.5 V551 H532.8 V545.5"/></g><path d="M554.3 551.7 H560.6" stroke="#d0d0d0" stroke-width="1"/><path d="M566.3 551.7 H655.6" stroke="#a8a8a8" stroke-width="1"/><rect x="608.8" y="546.3" width="4.6" height="10.8" rx="0.8" fill="#b4b4b4"/><path d="M661.3 551.7 H667.6 M664.4 548.5 V554.9" stroke="#d0d0d0" stroke-width="1"/><text x="680.3" y="555.4" font-size="10" fill="#f0f0f0" text-anchor="start" font-weight="normal" textLength="23.5" lengthAdjust="spacingAndGlyphs">100%</text></svg></div>
</body>
</html>
